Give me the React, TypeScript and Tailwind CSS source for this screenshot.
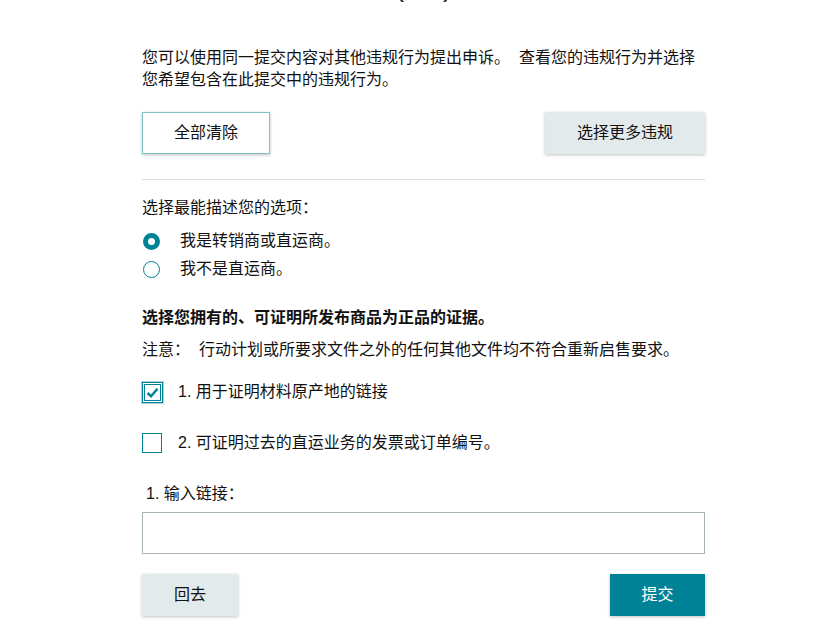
export default function App() {
  const font = { fontFamily: '"Liberation Sans", "Noto Sans CJK SC", sans-serif' };
  return (
    <div className="min-h-screen bg-white text-[#111] text-[16px] leading-[22px] overflow-hidden" style={font}>
      <div className="ml-[142px] w-[563px]">
        <h1 className="-mt-[29px] text-center text-[28px] leading-[32px] text-[#222]">(1/2)</h1>

        <p className="mt-[44px]">
          您可以使用同一提交内容对其他违规行为提出申诉。&nbsp; 查看您的违规行为并选择您希望包含在此提交中的违规行为。
        </p>

        <div className="mt-[21px] flex justify-between">
          <button className="h-[42px] w-[128px] border border-[#7fc3c3] bg-white shadow-[0_1px_3px_rgba(0,0,0,0.25)]">
            全部清除
          </button>
          <button className="h-[42px] w-[160px] bg-[#e3eaec] shadow-[0_1px_3px_rgba(0,0,0,0.25)]">
            选择更多违规
          </button>
        </div>

        <div className="mt-[25px] border-t border-[#dddddd]" />

        <div className="mt-[17px]">选择最能描述您的选项：</div>

        <div className="mt-[11px] flex flex-col gap-[6px]">
          <label className="flex items-center h-[22px]">
            <span className="w-[17px] h-[17px] rounded-full border-[5px] border-[#008296] bg-white ml-px" />
            <span className="ml-[20px]">我是转销商或直运商。</span>
          </label>
          <label className="flex items-center h-[22px]">
            <span className="w-[17px] h-[17px] rounded-full border border-[#008296] bg-white ml-px" />
            <span className="ml-[20px]">我不是直运商。</span>
          </label>
        </div>

        <h2 className="mt-[27px] font-bold">选择您拥有的、可证明所发布商品为正品的证据。</h2>
        <p className="mt-[10px]">注意：&nbsp;&nbsp;行动计划或所要求文件之外的任何其他文件均不符合重新启售要求。</p>

        <div className="mt-[20px] flex items-center">
          <span className="w-[21px] h-[21px] border-[3px] border-double border-[#008296] flex items-center justify-center outline outline-1 outline-[#a9d4d8]">
            <svg width="13" height="11" viewBox="0 0 13 11">
              <path d="M1.5 6 L5 9.2 L11.5 1.8" fill="none" stroke="#008296" strokeWidth="2.4" />
            </svg>
          </span>
          <span className="ml-[15px]">1. 用于证明材料原产地的链接</span>
        </div>

        <div className="mt-[29px] flex items-center">
          <span className="w-[20px] h-[20px] border-[1.5px] border-[#008296] bg-white" />
          <span className="ml-[16px]">2. 可证明过去的直运业务的发票或订单编号。</span>
        </div>

        <div className="mt-[29px] ml-[4px]">1. 输入链接：</div>

        <input className="mt-[7px] block w-full h-[42px] border border-[#a9b5b5] outline-none px-2" />

        <div className="mt-[20px] flex justify-between">
          <button className="h-[42px] w-[96px] bg-[#e3eaec] shadow-[0_1px_3px_rgba(0,0,0,0.25)]">回去</button>
          <button className="h-[42px] w-[95px] bg-[#008296] text-white shadow-[0_1px_3px_rgba(0,0,0,0.25)]">提交</button>
        </div>
      </div>
    </div>
  );
}
